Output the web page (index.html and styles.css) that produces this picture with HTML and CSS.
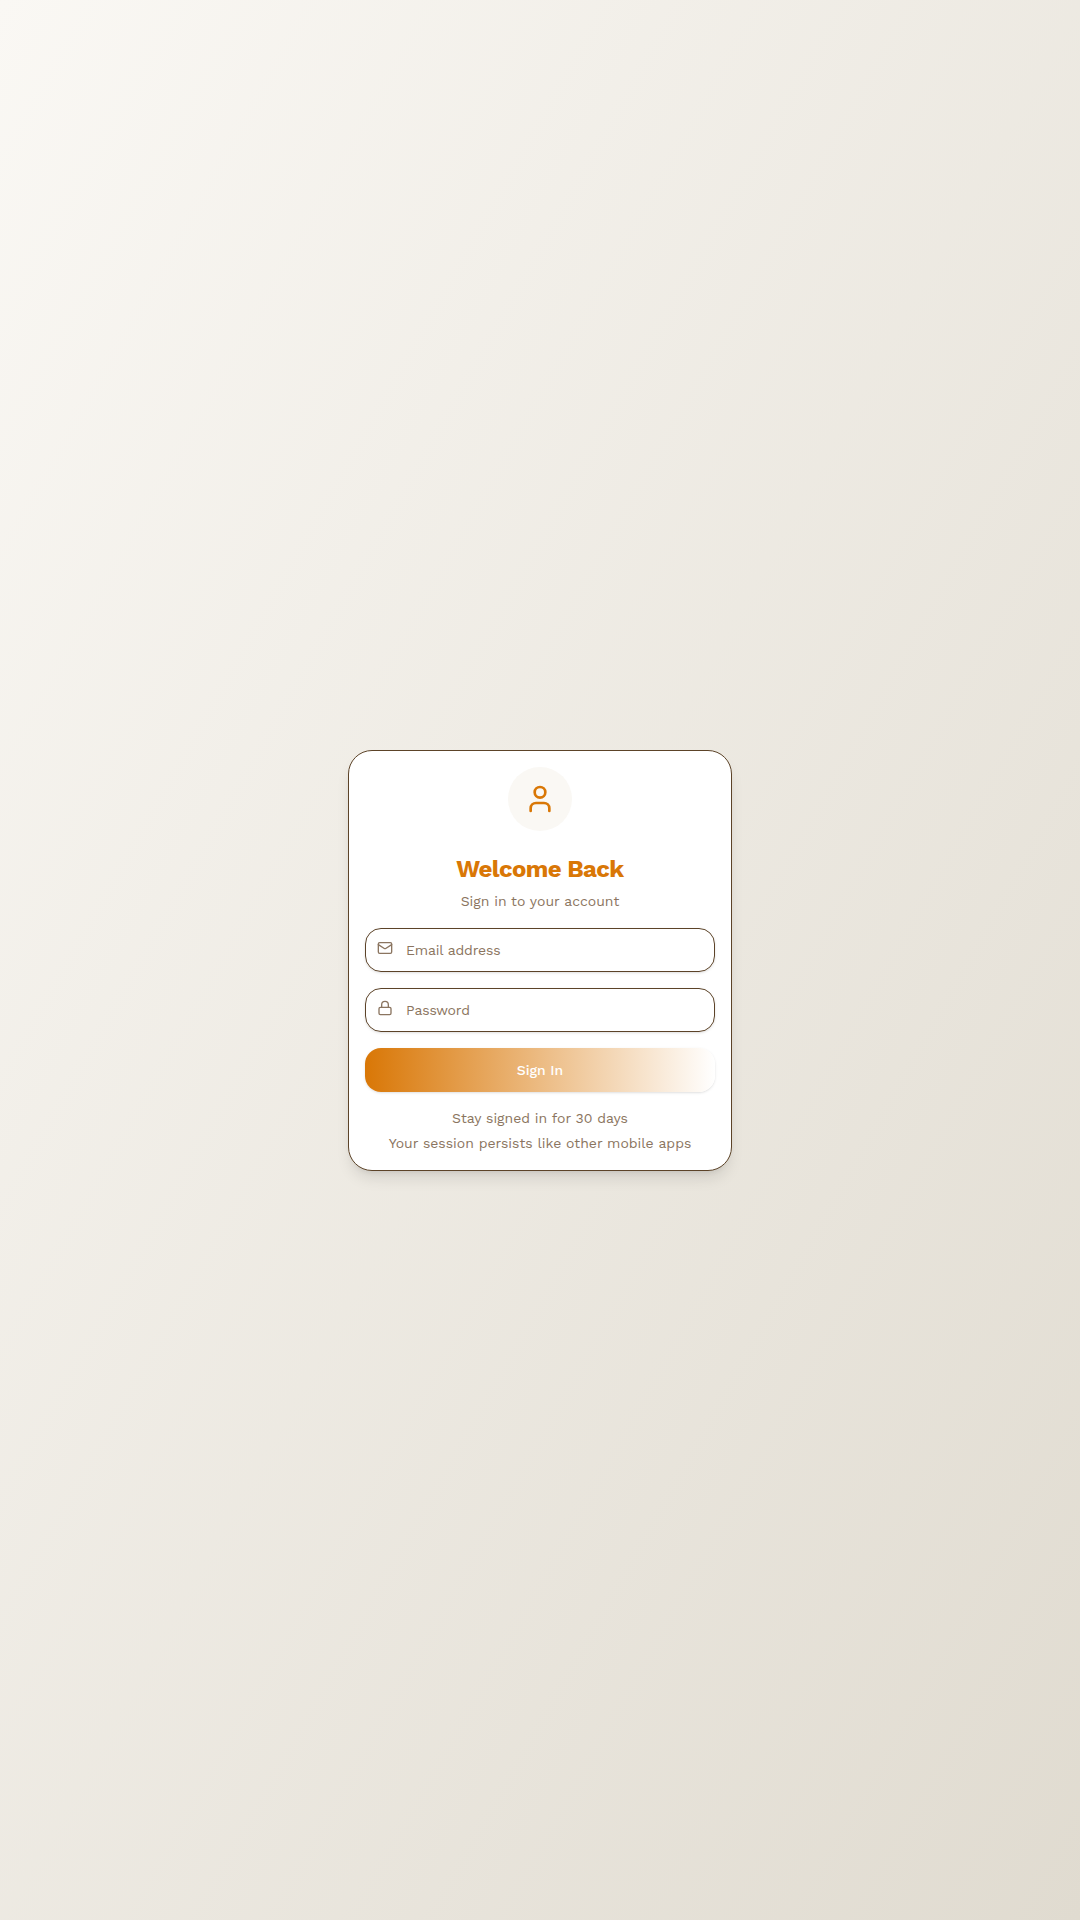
FILE: index.html
```html
<!DOCTYPE html>
<html lang="en">
<head>
<meta charset="utf-8">
<title>Sign In</title>
<link rel="stylesheet" href="styles.css">
</head>
<body>
<main class="card">
  <div class="avatar">
    <svg class="avatar-icon" viewBox="0 0 24 24"><path d="M19 21v-2a4 4 0 0 0-4-4H9a4 4 0 0 0-4 4v2"/><circle cx="12" cy="7" r="4"/></svg>
  </div>
  <h1 class="title">Welcome Back</h1>
  <p class="subtitle">Sign in to your account</p>
  <form class="form">
    <label class="field">
      <svg class="field-icon" viewBox="0 0 24 24"><rect x="2" y="4" width="20" height="16" rx="2"/><path d="m22 7-8.97 5.7a1.94 1.94 0 0 1-2.06 0L2 7"/></svg>
      <input class="input" type="email" placeholder="Email address">
    </label>
    <label class="field">
      <svg class="field-icon" viewBox="0 0 24 24"><rect x="3" y="11" width="18" height="11" rx="2"/><path d="M7 11V7a5 5 0 0 1 10 0v4"/></svg>
      <input class="input" type="password" placeholder="Password">
    </label>
    <button class="submit" type="button">Sign In</button>
  </form>
  <div class="notes">
    <p class="note">Stay signed in for 30 days</p>
    <p class="note">Your session persists like other mobile apps</p>
  </div>
</main>
</body>
</html>
```
FILE: styles.css
```css
* { box-sizing: border-box; margin: 0; }
body {
  min-height: 100vh;
  display: flex;
  align-items: center;
  justify-content: center;
  background: linear-gradient(to bottom right, #faf8f4, #e0dbd0);
  font-family: "Work Sans", Inter, sans-serif;
  font-size: 14px;
  color: #8b7560;
}
.card {
  width: 384px;
  height: 421px;
  padding: 16px;
  display: flex;
  flex-direction: column;
  align-items: center;
  background: #fff;
  border: 1px solid #5c4328;
  border-radius: 24px;
  box-shadow: 0 10px 15px -3px rgba(0, 0, 0, .1), 0 4px 6px -4px rgba(0, 0, 0, .1);
}
.avatar {
  width: 64px;
  height: 64px;
  display: grid;
  place-items: center;
  border-radius: 50%;
  background: #faf8f4;
}
.avatar-icon, .field-icon { fill: none; stroke: currentColor; stroke-width: 2; stroke-linecap: round; stroke-linejoin: round; }
.avatar-icon { width: 32px; height: 32px; color: #d97706; }
.title { margin-top: 22px; font-size: 24px; line-height: 32px; font-weight: 700; letter-spacing: -0.025em; color: #d97706; }
.subtitle { margin-top: 6px; line-height: 20px; }
.form { width: 100%; margin-top: 17px; display: grid; gap: 16px; }
.field {
  height: 44px;
  display: flex;
  padding: 0 11px;
  gap: 13px;
  border: 1px solid #5c4328;
  border-radius: 16px;
  box-shadow: 0 1px 3px rgba(0, 0, 0, .1), 0 1px 2px -1px rgba(0, 0, 0, .1);
}
.field-icon { width: 16px; height: 16px; margin-top: 11px; flex: none; }
.input { flex: 1; min-width: 0; padding: 0; border: 0; outline: 0; background: none; font: inherit; letter-spacing: -0.01em; color: inherit; }
.input::placeholder { color: inherit; opacity: 1; }
.submit {
  height: 44px;
  border: 0;
  border-radius: 16px;
  background: linear-gradient(to right, #d97706, #fff);
  box-shadow: 0 1px 3px rgba(0, 0, 0, .1), 0 1px 2px -1px rgba(0, 0, 0, .1);
  font: 500 14px "Work Sans", Inter, sans-serif;
  color: #fff;
}
.notes { margin-top: 16px; display: grid; gap: 5px; text-align: center; }
.note { line-height: 20px; white-space: nowrap; }
```
